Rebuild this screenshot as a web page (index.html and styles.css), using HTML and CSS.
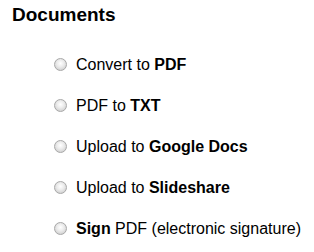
FILE: index.html
```html
<!DOCTYPE html>
<html lang="en">
<head>
    <meta charset="UTF-8">
    <title>Documents</title>
    <link rel="stylesheet" href="styles.css">
</head>
<body>
<div class="panel">
    <h2 class="title">Documents</h2>
    <ul class="options">
        <li><label><span class="radio"></span>Convert to <b>PDF</b></label></li>
        <li><label><span class="radio"></span>PDF to <b>TXT</b></label></li>
        <li><label><span class="radio"></span>Upload to <b>Google Docs</b></label></li>
        <li><label><span class="radio"></span>Upload to <b>Slideshare</b></label></li>
        <li><label><span class="radio"></span><b>Sign</b> PDF (electronic signature)</label></li>
    </ul>
</div>
</body>
</html>
```

FILE: styles.css
```css
body {
    margin: 0;
    background: #ffffff;
    color: #000000;
    font-family: 'Liberation Sans', Arial, sans-serif;
}
.panel {
    padding: 4px 0 0 12px;
}
.title {
    margin: 0;
    font-size: 19px;
    font-weight: bold;
    line-height: 22px;
}
.options {
    list-style: none;
    margin: 0;
    padding: 29px 0 0 42px;
    display: flex;
    flex-direction: column;
    gap: 22px;
}
.options li {
    font-size: 16px;
    line-height: 19px;
    white-space: nowrap;
}
.radio {
    display: inline-block;
    box-sizing: border-box;
    width: 13px;
    height: 13px;
    border: 1px solid #a8a8a8;
    border-radius: 50%;
    background: radial-gradient(circle at 50% 40%, #ffffff 0%, #ececec 40%, #c4c4c4 100%);
    margin-right: 9px;
    vertical-align: -1px;
}
```
